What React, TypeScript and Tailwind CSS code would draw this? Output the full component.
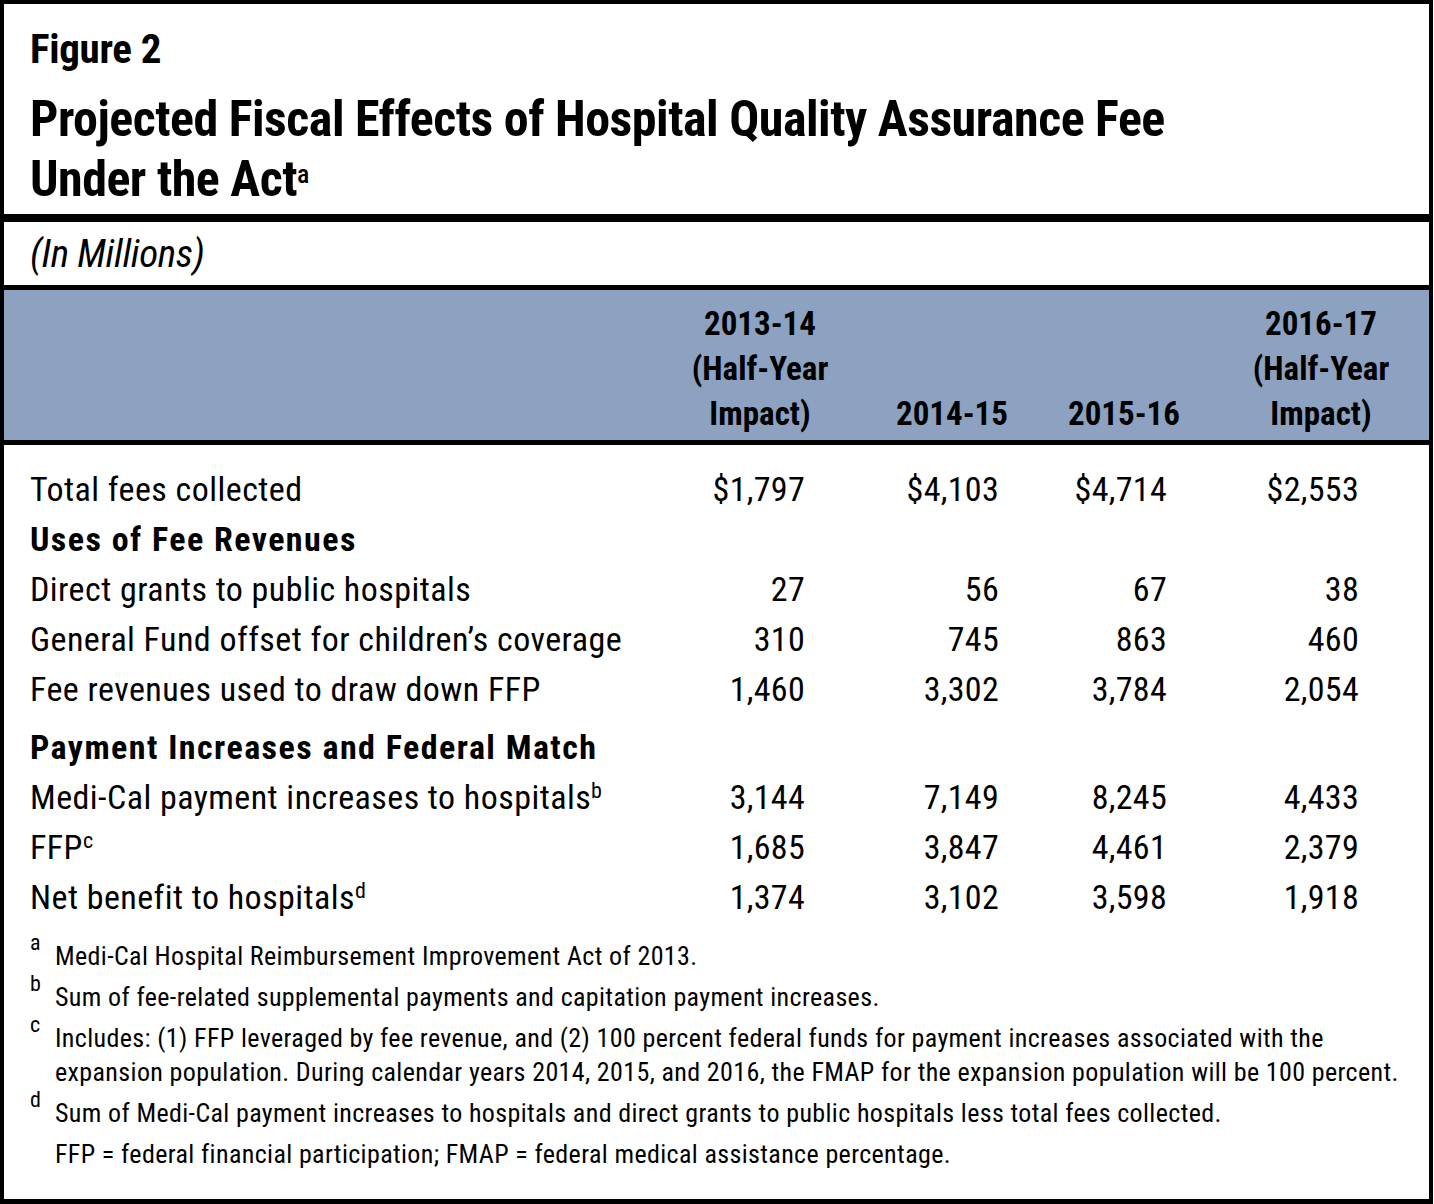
import React from "react";

interface Row {
    label: React.ReactNode;
    values: string[];
    bold?: boolean;
    extraTop?: boolean;
}

const rows: Row[] = [
    { label: "Total fees collected", values: ["$1,797", "$4,103", "$4,714", "$2,553"] },
    { label: "Uses of Fee Revenues", values: [], bold: true },
    { label: "Direct grants to public hospitals", values: ["27", "56", "67", "38"] },
    { label: "General Fund offset for children\u2019s coverage", values: ["310", "745", "863", "460"] },
    { label: "Fee revenues used to draw down FFP", values: ["1,460", "3,302", "3,784", "2,054"] },
    { label: "Payment Increases and Federal Match", values: [], bold: true, extraTop: true },
    {
        label: (
            <>
                Medi-Cal payment increases to hospitals<sup className="text-[22px]">b</sup>
            </>
        ),
        values: ["3,144", "7,149", "8,245", "4,433"],
    },
    {
        label: (
            <>
                FFP<sup className="text-[22px]">c</sup>
            </>
        ),
        values: ["1,685", "3,847", "4,461", "2,379"],
    },
    {
        label: (
            <>
                Net benefit to hospitals<sup className="text-[22px]">d</sup>
            </>
        ),
        values: ["1,374", "3,102", "3,598", "1,918"],
    },
];

// widths of the number cells, right edges at 805 / 999 / 1167 / 1359
const cellWidths = ["w-[125px]", "w-[194px]", "w-[168px]", "w-[192px]"];

const notes: { mark?: string; text: React.ReactNode }[] = [
    { mark: "a", text: "Medi-Cal Hospital Reimbursement Improvement Act of 2013." },
    { mark: "b", text: "Sum of fee-related supplemental payments and capitation payment increases." },
    {
        mark: "c",
        text: (
            <>
                Includes: (1) FFP leveraged by fee revenue, and (2) 100 percent federal funds for payment increases associated with the
                <br />
                expansion population. During calendar years 2014, 2015, and 2016, the FMAP for the expansion population will be 100 percent.
            </>
        ),
    },
    { mark: "d", text: "Sum of Medi-Cal payment increases to hospitals and direct grants to public hospitals less total fees collected." },
    { text: "FFP = federal financial participation; FMAP = federal medical assistance percentage." },
];

const App: React.FC = () => {
    return (
        <div className="w-[1434px] h-[1204px] bg-white">
            <div className="w-[1433px] h-[1204px] border-l-4 border-t-4 border-r-4 border-b-[5px] border-black flex flex-col text-black font-['Roboto',sans-serif] font-stretch-condensed">
                {/* title */}
                <div className="pl-[26px] pt-[20px] pb-[5px] font-bold">
                    <div className="text-[41px] leading-[50px] tracking-[-0.3px]">Figure 2</div>
                    <div className="mt-[15px] text-[50px] leading-[60px] tracking-[-0.5px]">
                        Projected Fiscal Effects of Hospital Quality Assurance Fee
                        <br />
                        Under the Act<sup className="text-[26px] font-medium">a</sup>
                    </div>
                </div>
                <div className="h-[8px] bg-black" />
                <div className="pl-[26px] h-[63px] text-[39px] leading-[64px] italic tracking-[-0.3px]">(In Millions)</div>
                <div className="h-[5px] bg-black" />

                {/* column header */}
                <div className="bg-[#8ca2c0] h-[150px] pt-[11px] flex text-[33px] leading-[45px] font-bold">
                    <div className="w-[686px] shrink-0" />
                    <div className="w-[140px] shrink-0 text-center">
                        2013-14
                        <br />
                        (Half-Year
                        <br />
                        Impact)
                    </div>
                    <div className="ml-[52px] w-[140px] shrink-0 text-center flex flex-col justify-end pb-[4px]">2014-15</div>
                    <div className="ml-[32px] w-[140px] shrink-0 text-center flex flex-col justify-end pb-[4px]">2015-16</div>
                    <div className="ml-[57px] w-[140px] shrink-0 text-center">
                        2016-17
                        <br />
                        (Half-Year
                        <br />
                        Impact)
                    </div>
                </div>
                <div className="h-[5px] bg-black" />

                {/* body rows */}
                <div className="pt-[19px] text-[34px] leading-[50px]">
                    {rows.map((row, i) => (
                        <div key={i} className={`flex ${row.extraTop ? "mt-[8px]" : ""}`}>
                            <div
                                className={`w-[676px] shrink-0 pl-[26px] whitespace-nowrap ${
                                    row.bold ? "font-bold tracking-[1.45px]" : "tracking-[0.45px]"
                                }`}
                            >
                                {row.label}
                            </div>
                            {row.values.map((v, j) => (
                                <div key={j} className={`${cellWidths[j]} shrink-0 text-right tracking-[0.3px]`}>
                                    {v}
                                </div>
                            ))}
                        </div>
                    ))}
                </div>

                {/* footnotes */}
                <div className="pt-[17px] pl-[26px] flex flex-col gap-[7px] text-[26px] leading-[34px] tracking-[0.37px]">
                    {notes.map((n, i) => (
                        <div key={i} className="flex items-start">
                            <span className="block w-[25px] shrink-0 text-[22px] leading-[8px] tracking-normal">{n.mark}</span>
                            <div className="whitespace-nowrap">{n.text}</div>
                        </div>
                    ))}
                </div>
            </div>
        </div>
    );
};

export default App;
